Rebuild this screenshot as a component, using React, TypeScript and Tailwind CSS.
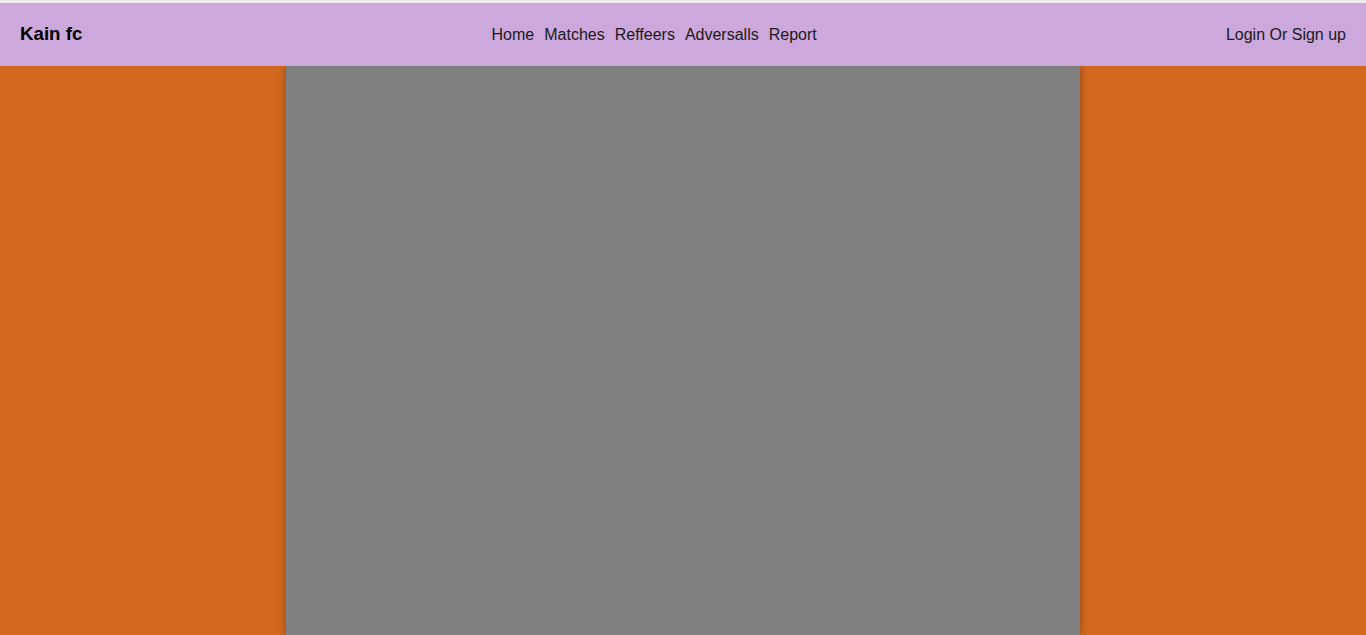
export default function App() {
  return (
    <div className="h-[635px] flex flex-col bg-[#d2691e] overflow-hidden" style={{ fontFamily: '"Liberation Sans", Arial, sans-serif' }}>
      <div className="h-[3px] bg-[#ececec] shrink-0" />
      <nav className="h-[63px] shrink-0 bg-[#cda8dd] flex items-center justify-between px-5 text-black relative z-10">
        <span className="text-[18.72px] font-bold">Kain fc</span>
        <ul className="flex gap-[10px] text-[16px] text-[#1a1a1a]">
          <li>Home</li>
          <li>Matches</li>
          <li>Reffeers</li>
          <li>Adversalls</li>
          <li>Report</li>
        </ul>
        <span className="text-[16px] text-[#1a1a1a]">Login Or Sign up</span>
      </nav>
      <main className="flex-1 flex justify-center">
        <div className="w-[794px] bg-[#808080] shadow-[0_0_8px_rgba(0,0,0,0.35)]" />
      </main>
    </div>
  );
}
